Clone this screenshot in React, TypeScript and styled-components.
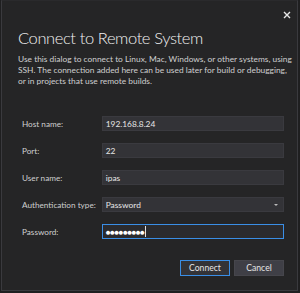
import React from "react";
import styled, { createGlobalStyle } from "styled-components";

const Global = createGlobalStyle`
  html, body { margin: 0; padding: 0; background: #1f1f20; }
  body { font-family: Lato, "Noto Sans", sans-serif; }
`;

const Window = styled.div`
  box-sizing: border-box;
  width: 297px;
  height: 291px;
  margin-left: 1px;
  background: #252526;
  border: 1px solid #3a3a3e;
  border-top-color: #2a2a2c;
  padding: 0 13px 0 16px;
  display: flex;
  flex-direction: column;
  position: relative;
`;

const Close = styled.button`
  position: absolute;
  top: 7px;
  right: 3px;
  width: 14px;
  height: 14px;
  padding: 0;
  border: none;
  background: transparent;
  display: flex;
  align-items: center;
  justify-content: center;
`;

const Title = styled.h1`
  margin: 27px 0 0 0;
  font-family: Lato, sans-serif;
  font-weight: 300;
  font-size: 16.5px;
  line-height: 20px;
  letter-spacing: -0.4px;
  color: #f1f1f1;
`;

const Desc = styled.p`
  margin: 6px 0 0 0;
  font-family: Lato, sans-serif;
  font-size: 8.4px;
  line-height: 11px;
  color: #cfcfcf;
  white-space: nowrap;
`;

const Form = styled.div`
  margin-top: 29px;
  display: flex;
  flex-direction: column;
  gap: 12px;
`;

const Row = styled.div`
  display: flex;
  align-items: center;
  height: 15px;
`;

const Label = styled.label`
  width: 84px;
  padding-left: 4px;
  box-sizing: border-box;
  font-family: Lato, sans-serif;
  font-size: 8.2px;
  color: #cfcfcf;
  white-space: nowrap;
`;

const Field = styled.div<{ $focused?: boolean }>`
  box-sizing: border-box;
  width: 183px;
  height: 15px;
  background: ${(p) => (p.$focused ? "#2b2b2e" : "#333337")};
  border: 1px solid ${(p) => (p.$focused ? "#3a8ee6" : "#3a3a3f")};
  display: flex;
  align-items: center;
  padding-left: 3px;
  font-family: Lato, sans-serif;
  font-size: 8.4px;
  color: #e6e6e6;
  position: relative;
`;

const Arrow = styled.span`
  position: absolute;
  right: 5px;
  top: 6px;
  width: 0;
  height: 0;
  border-left: 2px solid transparent;
  border-right: 2px solid transparent;
  border-top: 2px solid #bbbbbb;
`;

const Dots = styled.span`
  font-size: 8px;
  letter-spacing: -0.5px;
  color: #ffffff;
`;

const Caret = styled.span`
  display: inline-block;
  width: 1px;
  height: 11px;
  background: #e0e0e0;
  margin-left: 1px;
`;

const Buttons = styled.div`
  margin-top: 21px;
  display: flex;
  justify-content: flex-end;
  gap: 4px;
`;

const Button = styled.button<{ $primary?: boolean }>`
  box-sizing: border-box;
  width: 50px;
  height: 16px;
  padding: 0;
  background: ${(p) => (p.$primary ? "#333337" : "#3f3f46")};
  border: 1px solid ${(p) => (p.$primary ? "#3a8ee6" : "#46464c")};
  color: #e6e6e6;
  font-family: Lato, sans-serif;
  font-size: 8.6px;
`;

export default function App() {
  return (
    <>
      <Global />
      <Window>
        <Close aria-label="Close">
          <svg width="8" height="8" viewBox="0 0 8 8">
            <path d="M1 1 L7 7 M7 1 L1 7" stroke="#e8e8e8" strokeWidth="1.4" />
          </svg>
        </Close>
        <Title>Connect to Remote System</Title>
        <Desc>
          Use this dialog to connect to Linux, Mac, Windows, or other systems, using
          <br />
          SSH. The connection added here can be used later for build or debugging,
          <br />
          or in projects that use remote builds.
        </Desc>
        <Form>
          <Row>
            <Label>Host name:</Label>
            <Field>192.168.8.24</Field>
          </Row>
          <Row>
            <Label>Port:</Label>
            <Field>22</Field>
          </Row>
          <Row>
            <Label>User name:</Label>
            <Field>ipas</Field>
          </Row>
          <Row>
            <Label>Authentication type:</Label>
            <Field>
              Password
              <Arrow />
            </Field>
          </Row>
          <Row>
            <Label>Password:</Label>
            <Field $focused>
              <Dots>●●●●●●●●●</Dots>
              <Caret />
            </Field>
          </Row>
        </Form>
        <Buttons>
          <Button $primary>Connect</Button>
          <Button>Cancel</Button>
        </Buttons>
      </Window>
    </>
  );
}
